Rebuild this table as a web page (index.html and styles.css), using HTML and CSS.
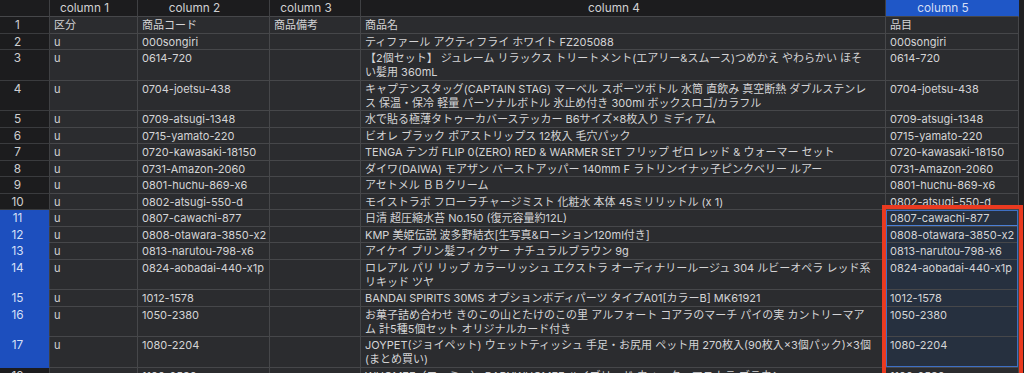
FILE: index.html
```html
<!DOCTYPE html>
<html lang="ja">
<head>
<meta charset="utf-8">
<link rel="stylesheet" href="styles.css">
</head>
<body>
<div class="app">
  <div class="sheet">
    <div class="hd corner"></div>
    <div class="hd">column 1</div>
    <div class="hd">column 2</div>
    <div class="hd">column 3</div>
    <div class="hd">column 4</div>
    <div class="hd hd-sel">column 5</div>

    <div class="rn">1</div><div class="c">区分</div><div class="c">商品コード</div><div class="c">商品備考</div><div class="c">商品名</div><div class="c">品目</div>
    <div class="rn">2</div><div class="c">u</div><div class="c">000songiri</div><div class="c"></div><div class="c">ティファール アクティフライ ホワイト FZ205088</div><div class="c">000songiri</div>
    <div class="rn">3</div><div class="c">u</div><div class="c">0614-720</div><div class="c"></div><div class="c">【2個セット】 ジュレーム リラックス トリートメント(エアリー&amp;スムース)つめかえ やわらかい ほそ<br>い髪用 360mL</div><div class="c">0614-720</div>
    <div class="rn">4</div><div class="c">u</div><div class="c">0704-joetsu-438</div><div class="c"></div><div class="c">キャプテンスタッグ(CAPTAIN STAG) マーベル スポーツボトル 水筒 直飲み 真空断熱 ダブルステンレ<br>ス 保温・保冷 軽量 パーソナルボトル 氷止め付き 300ml ボックスロゴ/カラフル</div><div class="c">0704-joetsu-438</div>
    <div class="rn">5</div><div class="c">u</div><div class="c">0709-atsugi-1348</div><div class="c"></div><div class="c">水で貼る極薄タトゥーカバーステッカー B6サイズ×8枚入り ミディアム</div><div class="c">0709-atsugi-1348</div>
    <div class="rn">6</div><div class="c">u</div><div class="c">0715-yamato-220</div><div class="c"></div><div class="c">ビオレ ブラック ポアストリップス 12枚入 毛穴パック</div><div class="c">0715-yamato-220</div>
    <div class="rn">7</div><div class="c">u</div><div class="c">0720-kawasaki-18150</div><div class="c"></div><div class="c">TENGA テンガ FLIP 0(ZERO) RED &amp; WARMER SET フリップ ゼロ レッド &amp; ウォーマー セット</div><div class="c">0720-kawasaki-18150</div>
    <div class="rn">8</div><div class="c">u</div><div class="c">0731-Amazon-2060</div><div class="c"></div><div class="c">ダイワ(DAIWA) モアザン バーストアッパー 140mm F ラトリンイナッ子ピンクベリー ルアー</div><div class="c">0731-Amazon-2060</div>
    <div class="rn">9</div><div class="c">u</div><div class="c">0801-huchu-869-x6</div><div class="c"></div><div class="c">アセトメル ＢＢクリーム</div><div class="c">0801-huchu-869-x6</div>
    <div class="rn">10</div><div class="c">u</div><div class="c">0802-atsugi-550-d</div><div class="c"></div><div class="c">モイストラボ フローラチャージミスト 化粧水 本体 45ミリリットル (x 1)</div><div class="c">0802-atsugi-550-d</div>
    <div class="rn rn-sel">11</div><div class="c">u</div><div class="c">0807-cawachi-877</div><div class="c"></div><div class="c">日清 超圧縮水苔 No.150 (復元容量約12L)</div><div class="c c-sel c-active">0807-cawachi-877</div>
    <div class="rn rn-sel">12</div><div class="c">u</div><div class="c">0808-otawara-3850-x2</div><div class="c"></div><div class="c">KMP 美姫伝説 波多野結衣[生写真&amp;ローション120ml付き]</div><div class="c c-sel">0808-otawara-3850-x2</div>
    <div class="rn rn-sel">13</div><div class="c">u</div><div class="c">0813-narutou-798-x6</div><div class="c"></div><div class="c">アイケイ プリン髪フィクサー ナチュラルブラウン 9g</div><div class="c c-sel">0813-narutou-798-x6</div>
    <div class="rn rn-sel">14</div><div class="c">u</div><div class="c">0824-aobadai-440-x1p</div><div class="c"></div><div class="c">ロレアル パリ リップ カラーリッシュ エクストラ オーディナリールージュ 304 ルビーオペラ レッド系<br>リキッド ツヤ</div><div class="c c-sel">0824-aobadai-440-x1p</div>
    <div class="rn rn-sel">15</div><div class="c">u</div><div class="c">1012-1578</div><div class="c"></div><div class="c">BANDAI SPIRITS 30MS オプションボディパーツ タイプA01[カラーB] MK61921</div><div class="c c-sel">1012-1578</div>
    <div class="rn rn-sel">16</div><div class="c">u</div><div class="c">1050-2380</div><div class="c"></div><div class="c">お菓子詰め合わせ きのこの山とたけのこの里 アルフォート コアラのマーチ パイの実 カントリーマア<br>ム 計5種5個セット オリジナルカード付き</div><div class="c c-sel">1050-2380</div>
    <div class="rn rn-sel">17</div><div class="c">u</div><div class="c">1080-2204</div><div class="c"></div><div class="c">JOYPET(ジョイペット) ウェットティッシュ 手足・お尻用 ペット用 270枚入(90枚入×3個パック)×3個<br>(まとめ買い)</div><div class="c c-sel">1080-2204</div>
    <div class="rn">18</div><div class="c">u</div><div class="c">1100-2530</div><div class="c"></div><div class="c">WHOMEE（フーミー） BABYWHOMEE ハイブリッド ウォーターマスカラ ブラウン</div><div class="c">1100-2530</div>

    <div class="range"></div>
    <div class="callout"></div>
  </div>
</div>
</body>
</html>
```
FILE: styles.css
```css
html, body {
  margin: 0;
  padding: 0;
  background: #1f1f21;
}
.app {
  width: 1024px;
  height: 373px;
  overflow: hidden;
  background: #1f1f21;
}
.sheet {
  position: relative;
  display: grid;
  grid-template-columns: 50px 88px 132px 91px 525px 133px;
  width: 1019px;
  font-family: "Inter", "Noto Sans CJK JP", sans-serif;
  font-size: 11px;
  color: #d4d4d6;
}
.hd {
  height: 16px;
  line-height: 16px;
  background: #1c1c1e;
  border-right: 1px solid #3f4043;
  border-bottom: 1px solid #46474a;
  text-align: center;
  padding-right: 18px;
  font-size: 11.8px;
  color: #d0d0d2;
  white-space: nowrap;
}
.hd.corner { padding-right: 0; }
.hd-sel {
  background: #1f57c7;
  color: #d4def5;
  border-right-color: #1f57c7;
}
.rn {
  background: #1c1c1e;
  border-right: 1px solid #3f4043;
  border-bottom: 1px solid #3a3b3e;
  line-height: 14px;
  padding: 1px 14px 0.5px 0;
  text-align: center;
  font-size: 11.8px;
  color: #cfcfd1;
}
.rn-sel {
  background: #1d4fbe;
  color: #d6e0f7;
  border-bottom-color: #1d4fbe;
}
.c {
  background: #2b2c2f;
  border-right: 1px solid #46474a;
  border-bottom: 1px solid #46474a;
  line-height: 14px;
  padding: 1px 2px 0.5px 4px;
  white-space: nowrap;
  overflow: hidden;
}
.c-sel {
  background: #26303f;
}
.c-active {
  box-shadow: inset 0 0 0 1px #4a7fd6;
}
.range {
  position: absolute;
  left: 886px;
  top: 210px;
  width: 132px;
  height: 157px;
  border: 1px solid #3e6fc4;
  box-sizing: border-box;
  pointer-events: none;
}
.callout {
  position: absolute;
  left: 882px;
  top: 205px;
  width: 141px;
  height: 172px;
  border: 4px solid #ea3a20;
  box-sizing: border-box;
  pointer-events: none;
}
```
